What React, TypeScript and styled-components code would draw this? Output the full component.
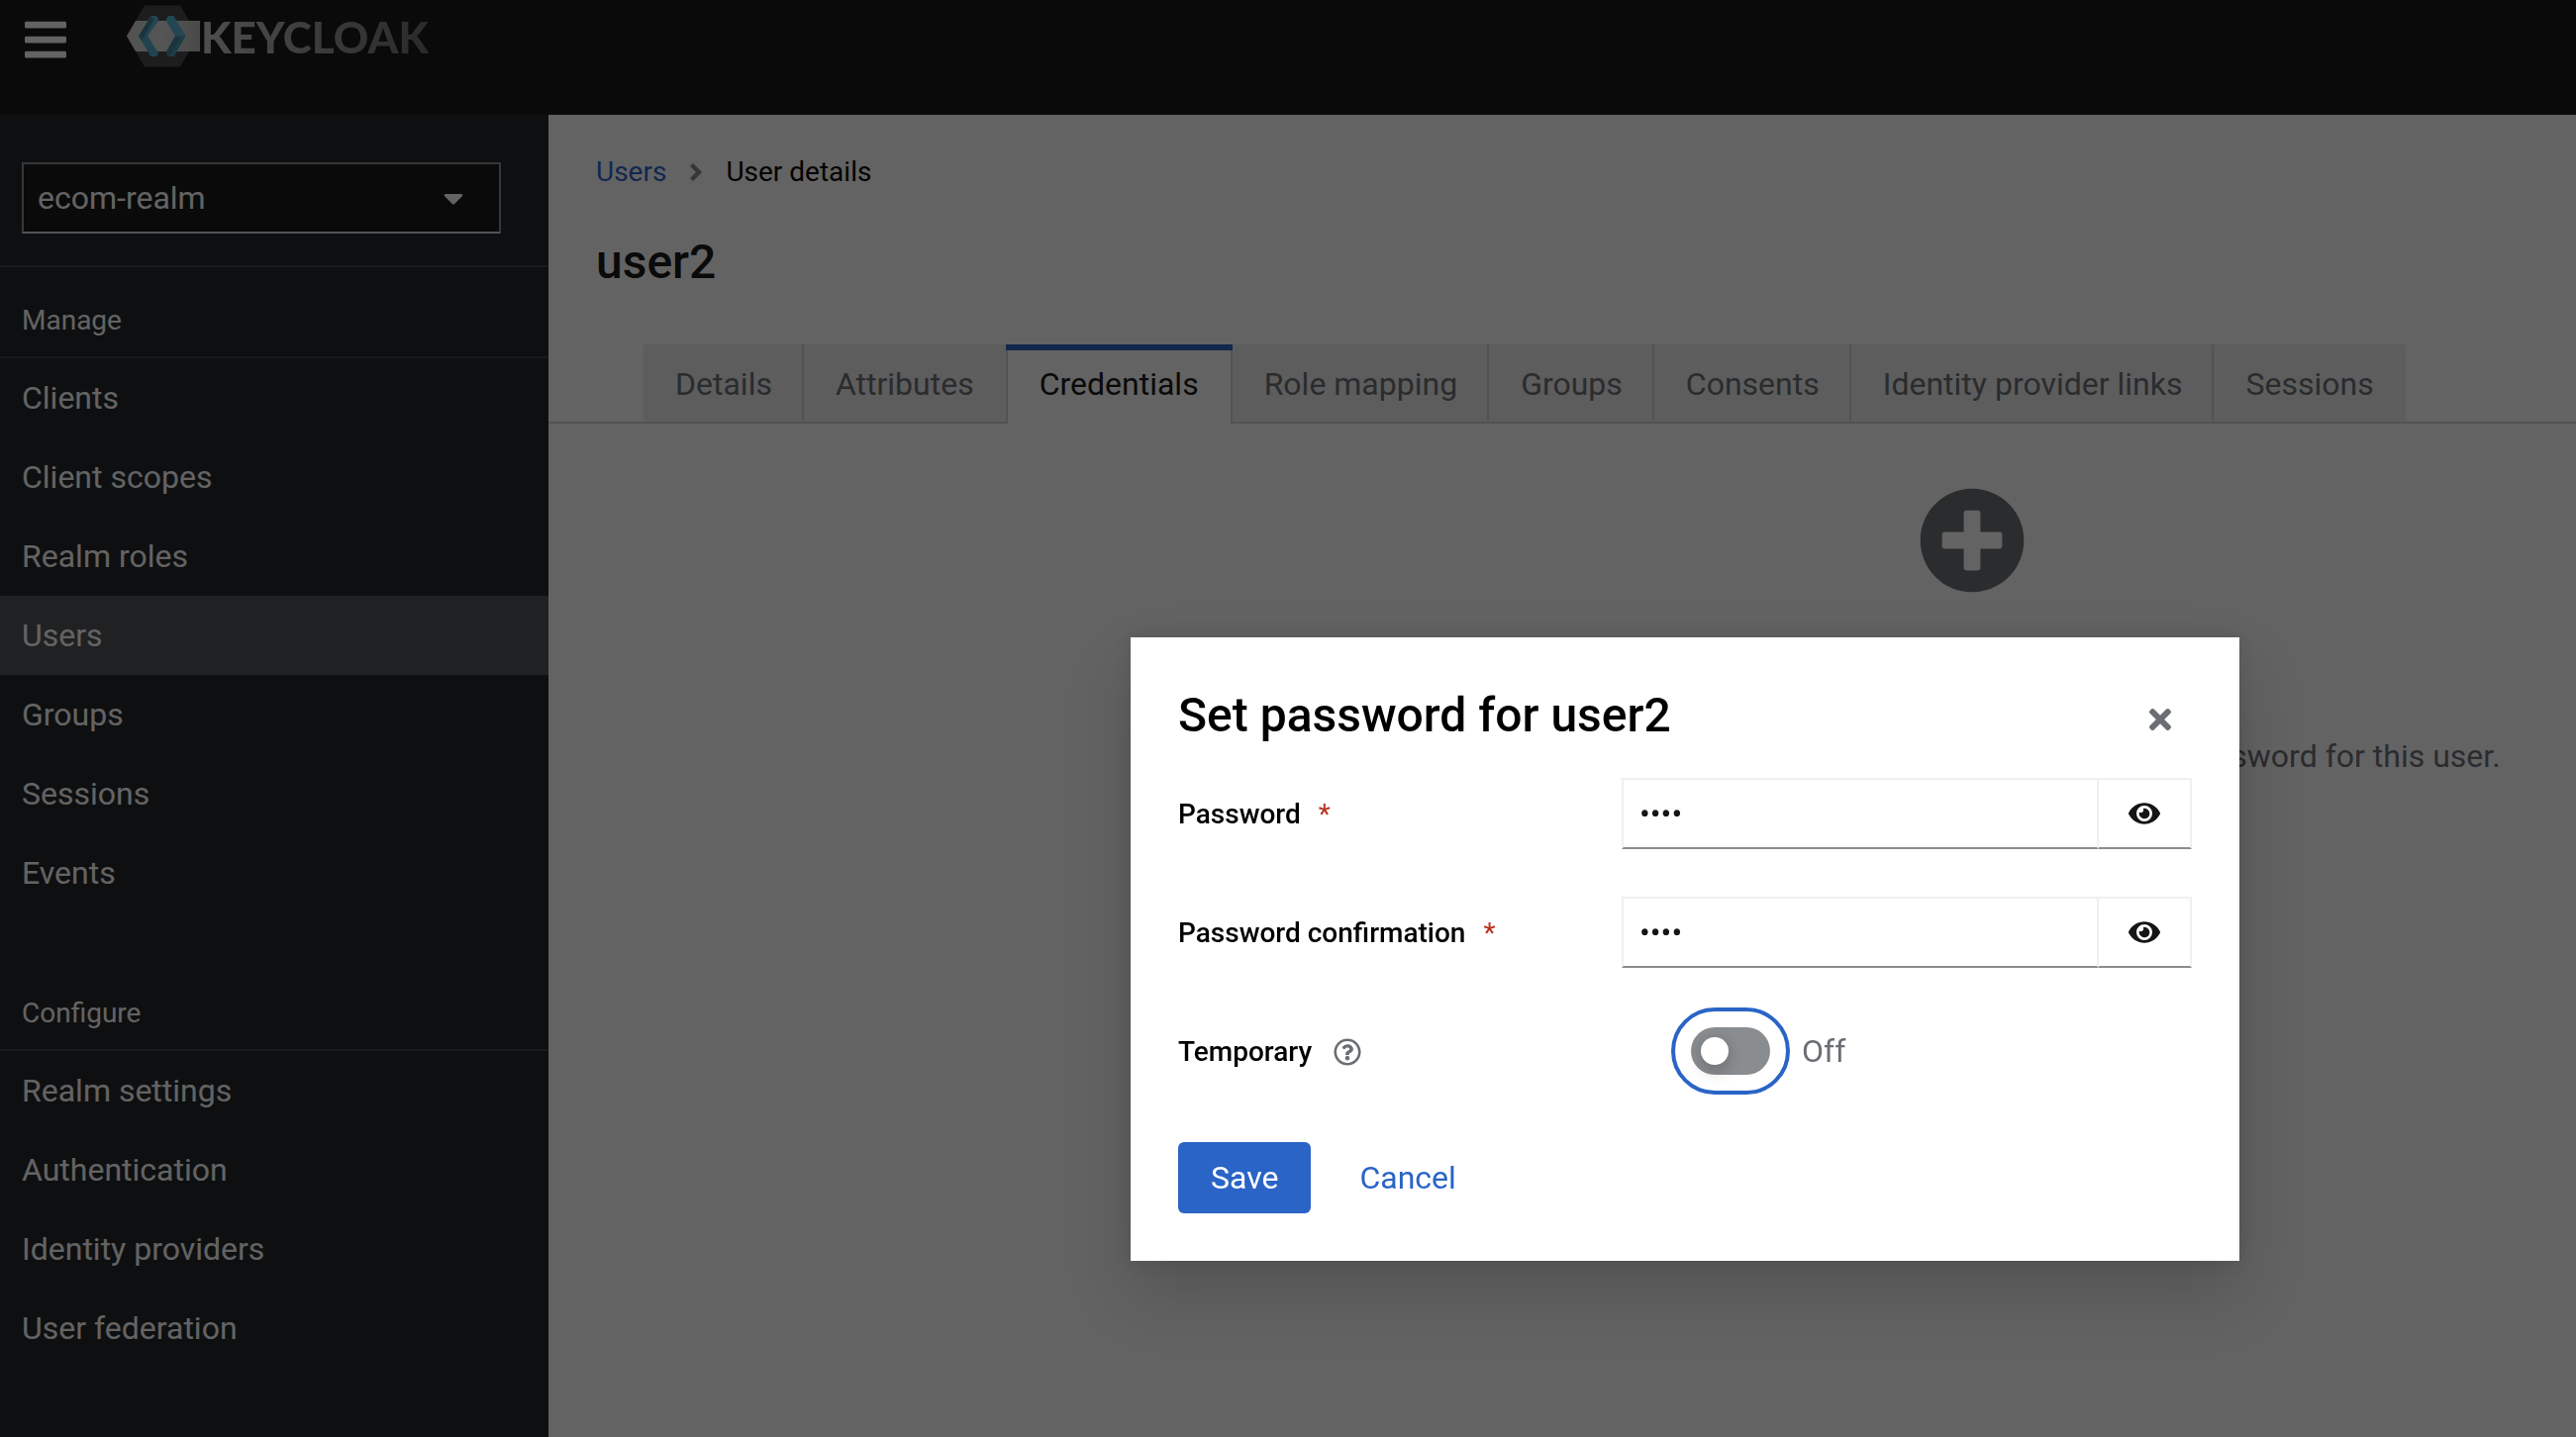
import React, { useState } from "react";
import styled, { createGlobalStyle, css } from "styled-components";
import {
  FaAngleRight,
  FaBars,
  FaCaretDown,
  FaEye,
  FaPlusCircle,
  FaRegQuestionCircle,
  FaTimes,
} from "react-icons/fa";

const c = {
  chrome: "#151515",
  sidebar: "#212427",
  sidebarActive: "#4f5255",
  sidebarLine: "#3c3f42",
  line: "#d2d2d2",
  lightLine: "#f0f0f0",
  muted: "#6a6e73",
  grey: "#8a8d90",
  link: "#2a64c6",
  danger: "#b9301c",
};

const GlobalStyle = createGlobalStyle`
  *, *::before, *::after { box-sizing: border-box; }
  html, body { margin: 0; }
  body {
    font-family: Roboto, "Liberation Sans", sans-serif;
    font-size: 32px;
    line-height: 48px;
    color: ${c.chrome};
    background: #fff;
    overflow: hidden;
  }
  button, input, select { font: inherit; color: inherit; }
  h1, h2, p, ul, ol { margin: 0; padding: 0; list-style: none; }
  svg { display: block; flex: none; }
`;

const Page = styled.div`
  display: grid;
  grid-template: auto 1fr / 554px minmax(0, 1fr);
  min-height: 100vh;
`;

const Masthead = styled.header`
  grid-column: 1 / -1;
  display: flex;
  align-items: flex-start;
  height: 116px;
  padding-left: 22px;
  background: ${c.chrome};
  color: #fff;
`;

const IconButton = styled.button`
  display: grid;
  place-items: center;
  padding: 0;
  border: 0;
  background: none;
  cursor: pointer;
`;

const MenuButton = styled(IconButton)`
  margin-top: 16px;
  font-size: 48px;
`;

const Brand = styled.a`
  display: flex;
  align-items: center;
  margin: 5px 0 0 57px;
  text-decoration: none;
`;

const Wordmark = styled.span`
  font: 900 44px/60px Lato, "Open Sans", sans-serif;
  color: transparent;
  background: linear-gradient(90deg, #c8c8c8, #6a6a6a);
  background-clip: text;
  -webkit-background-clip: text;
`;

const Sidebar = styled.nav`
  background: ${c.sidebar};
  color: #fff;
`;

const RealmPicker = styled.div`
  padding: 48px 48px 32px 22px;
  border-bottom: 2px solid ${c.sidebarLine};
`;

const SelectBox = styled.div`
  position: relative;
  display: flex;
  align-items: center;

  svg {
    position: absolute;
    right: 32px;
    pointer-events: none;
  }
`;

const Select = styled.select`
  appearance: none;
  width: 100%;
  height: 72px;
  padding: 0 64px 0 14px;
  border: 2px solid ${c.grey};
  border-bottom-color: ${c.line};
  border-radius: 0;
  background: ${c.chrome};
`;

const NavSection = styled.section`
  padding-top: 32px;

  & + & { padding-top: 80px; }
`;

const NavTitle = styled.h2`
  padding: 1px 22px 15px;
  border-bottom: 2px solid ${c.sidebarLine};
  font-size: 28px;
  line-height: 42px;
  font-weight: 400;
`;

const NavLink = styled.a<{ $current: boolean }>`
  display: block;
  padding: 16px 22px;
  color: #fff;
  text-decoration: none;
  background: ${(p) => (p.$current ? c.sidebarActive : "transparent")};
`;

const Main = styled.main`
  padding-top: 37px;
  background: #fff;
`;

const Breadcrumb = styled.ol`
  display: flex;
  align-items: center;
  gap: 16px;
  padding-left: 48px;
  font-size: 28px;
  line-height: 42px;
  color: #000;

  a { color: ${c.link}; text-decoration: none; }
  svg { color: ${c.grey}; }
  li { display: flex; align-items: center; gap: 16px; }
`;

const PageTitle = styled.h1`
  padding: 39px 48px 52px;
  font-size: 48px;
  line-height: 62px;
  font-weight: 500;
`;

const TabList = styled.div`
  display: flex;
  padding-left: 96px;
  box-shadow: inset 0 -2px 0 ${c.line};
`;

const Tab = styled.button<{ $active: boolean; $divider: boolean }>`
  border: 0;
  cursor: pointer;
  white-space: nowrap;
  ${(p) =>
    p.$active
      ? css`
          padding: 16px 34px;
          color: ${c.chrome};
          background: #fff;
          box-shadow: inset 0 6px 0 ${c.link}, inset 2px 0 0 ${c.line}, inset -2px 0 0 ${c.line};
        `
      : css`
          padding: 16px 32px;
          color: ${c.muted};
          background: ${c.lightLine};
          box-shadow: inset 0 -2px 0 ${c.line}${p.$divider ? `, inset -2px 0 0 ${c.line}` : ""};
        `}
`;

const EmptyState = styled.section`
  display: flex;
  flex-direction: column;
  align-items: center;
  gap: 140px;
  padding: 64px 0 0 828px;
  color: ${c.muted};
  white-space: nowrap;
`;

const EmptyStateText = styled.p`
  padding-right: 8px;
`;

const Backdrop = styled.div`
  position: fixed;
  inset: 0;
  display: flex;
  align-items: flex-start;
  justify-content: flex-end;
  padding: 644px 340px 0 0;
  background: rgba(3, 3, 3, 0.62);
`;

const Dialog = styled.section`
  width: 1120px;
  padding: 48px;
  background: #fff;
  box-shadow: 0 32px 64px rgba(3, 3, 3, 0.16), 0 0 16px rgba(3, 3, 3, 0.1);
`;

const DialogHeader = styled.header`
  display: flex;
  align-items: flex-end;
  justify-content: space-between;
  padding: 0 16px 32px 0;

  ${IconButton} {
    height: 54px;
    color: ${c.muted};
  }
`;

const DialogTitle = styled.h2`
  font-size: 48px;
  line-height: 62px;
  font-weight: 500;
  color: #000;
`;

const Form = styled.form`
  display: grid;
  gap: 48px;
`;

const FormRow = styled.div`
  display: grid;
  grid-template-columns: 448px minmax(0, 1fr);
  align-items: center;
  min-height: 72px;
`;

const LabelCell = styled.div`
  display: flex;
  align-items: center;
  gap: 22px;
  padding-top: 2px;
  color: ${c.muted};
`;

const Label = styled.label`
  font-size: 28px;
  line-height: 42px;
  font-weight: 500;
  color: #000;
`;

const Required = styled.span`
  margin-left: 18px;
  font-weight: 400;
  color: ${c.danger};
`;

const InputGroup = styled.div`
  display: flex;

  ${IconButton} {
    width: 94px;
    border: 2px solid ${c.lightLine};
    border-left: 0;
    border-bottom-color: ${c.grey};
    font-size: 32px;
  }
`;

const PasswordInput = styled.input`
  flex: 1;
  min-width: 0;
  height: 72px;
  padding: 0 16px;
  border: 2px solid ${c.lightLine};
  border-bottom-color: ${c.grey};
  border-radius: 0;
  background: #fff;
  outline: 0;
`;

const SwitchCell = styled.label`
  display: flex;
  align-items: center;
  gap: 32px;
  padding-left: 70px;
  color: ${c.muted};
`;

const Switch = styled.input`
  appearance: none;
  display: flex;
  align-items: center;
  width: 80px;
  height: 48px;
  margin: 0;
  padding: 0 10px;
  border-radius: 24px;
  background: ${c.grey};
  outline: 4px solid ${c.link};
  outline-offset: 16px;

  &::before {
    content: "";
    width: 28px;
    height: 28px;
    border-radius: 50%;
    background: #fff;
    box-shadow: 0 8px 16px rgba(3, 3, 3, 0.16), 0 0 12px rgba(3, 3, 3, 0.1);
  }

  &:checked { justify-content: flex-end; background: ${c.link}; }
`;

const Actions = styled.footer`
  display: flex;
  gap: 16px;
  padding-top: 8px;
`;

const ActionButton = styled.button<{ $primary?: boolean }>`
  padding: 12px 33px;
  border: 0;
  border-radius: 6px;
  cursor: pointer;
  color: ${(p) => (p.$primary ? "#fff" : c.link)};
  background: ${(p) => (p.$primary ? c.link : "transparent")};
`;

const navSections = [
  {
    title: "Manage",
    items: ["Clients", "Client scopes", "Realm roles", "Users", "Groups", "Sessions", "Events"],
  },
  {
    title: "Configure",
    items: ["Realm settings", "Authentication", "Identity providers", "User federation"],
  },
];

const tabs = [
  "Details",
  "Attributes",
  "Credentials",
  "Role mapping",
  "Groups",
  "Consents",
  "Identity provider links",
  "Sessions",
];
const activeTab = tabs.indexOf("Credentials");

function LogoMark() {
  return (
    <svg width="76" height="63" viewBox="0 0 76 63" aria-hidden="true">
      <defs>
        <linearGradient id="band" x1="0" x2="1" y1="0" y2="0">
          <stop offset="0" stopColor="#d0d0d0" />
          <stop offset="0.5" stopColor="#dadada" />
          <stop offset="1" stopColor="#bcbcbc" />
        </linearGradient>
      </defs>
      {/* hexagon and band */}
      <path d="M19 0.5H55L73 31.5L55 62.5H19L1 31.5Z" fill="#484848" />
      <path d="M10 16H75V47H10L1 31.5Z" fill="url(#band)" />
      {/* left bracket */}
      <path d="M25.500 11H31L33.500 15.500L22 31.500L33 49L31 52H25.500L13 31.500Z" fill="#58b4d4" />
      <path d="M13 31.500L22 31.500L33 49L31 52H25.500Z" fill="#53aaca" />
      <path d="M25.500 11L28.500 15L16.500 36L13 31.500Z" fill="#41859a" />
      {/* right bracket */}
      <path d="M43 11H48.500L60.500 31.500L48.500 52H43L40.500 48L50 31.500L40.500 15.500Z" fill="#58b4d4" />
      <path d="M50 31.500L60.500 31.500L48.500 52H43Z" fill="#4b9ab6" />
      <path d="M50 31.500L55 32.500L44.500 51.500L43 52L40.500 48Z" fill="#41859a" />
    </svg>
  );
}

function PasswordRow({ id, label }: { id: string; label: string }) {
  const [value, setValue] = useState("pass");
  const [visible, setVisible] = useState(false);
  return (
    <FormRow>
      <LabelCell>
        <Label htmlFor={id}>
          {label}
          <Required aria-hidden="true">*</Required>
        </Label>
      </LabelCell>
      <InputGroup>
        <PasswordInput
          id={id}
          type={visible ? "text" : "password"}
          value={value}
          onChange={(e) => setValue(e.target.value)}
          required
        />
        <IconButton type="button" aria-label="Show password" onClick={() => setVisible(!visible)}>
          <FaEye />
        </IconButton>
      </InputGroup>
    </FormRow>
  );
}

export default function App() {
  const [temporary, setTemporary] = useState(false);
  return (
    <>
      <GlobalStyle />
      <Page>
        <Masthead>
          <MenuButton type="button" aria-label="Global navigation">
            <FaBars />
          </MenuButton>
          <Brand href="#">
            <LogoMark />
            <Wordmark>KEYCLOAK</Wordmark>
          </Brand>
        </Masthead>

        <Sidebar aria-label="Global">
          <RealmPicker>
            <SelectBox>
              <Select aria-label="Realm" defaultValue="ecom-realm">
                <option>ecom-realm</option>
              </Select>
              <FaCaretDown />
            </SelectBox>
          </RealmPicker>
          {navSections.map((section) => (
            <NavSection key={section.title}>
              <NavTitle>{section.title}</NavTitle>
              <ul>
                {section.items.map((item) => (
                  <li key={item}>
                    <NavLink href="#" $current={item === "Users"}>
                      {item}
                    </NavLink>
                  </li>
                ))}
              </ul>
            </NavSection>
          ))}
        </Sidebar>

        <Main>
          <Breadcrumb>
            <li>
              <a href="#">Users</a>
            </li>
            <li>
              <FaAngleRight />
              User details
            </li>
          </Breadcrumb>
          <PageTitle>user2</PageTitle>
          <TabList role="tablist">
            {tabs.map((tab, i) => (
              <Tab
                key={tab}
                type="button"
                role="tab"
                aria-selected={i === activeTab}
                $active={i === activeTab}
                $divider={i !== activeTab - 1 && i !== tabs.length - 1}
              >
                {tab}
              </Tab>
            ))}
          </TabList>
          <EmptyState>
            <FaPlusCircle size={108} />
            <EmptyStateText>
              This user does not have any credentials. You can set password for this user.
            </EmptyStateText>
          </EmptyState>
        </Main>
      </Page>

      <Backdrop>
        <Dialog role="dialog" aria-modal="true" aria-labelledby="dialog-title">
          <DialogHeader>
            <DialogTitle id="dialog-title">Set password for user2</DialogTitle>
            <IconButton type="button" aria-label="Close">
              <FaTimes size={32} />
            </IconButton>
          </DialogHeader>
          <Form>
            <PasswordRow id="password" label="Password" />
            <PasswordRow id="password-confirmation" label="Password confirmation" />
            <FormRow>
              <LabelCell>
                <Label htmlFor="temporary">Temporary</Label>
                <IconButton type="button" aria-label="Help for Temporary">
                  <FaRegQuestionCircle size={28} />
                </IconButton>
              </LabelCell>
              <SwitchCell>
                <Switch
                  id="temporary"
                  type="checkbox"
                  role="switch"
                  checked={temporary}
                  onChange={(e) => setTemporary(e.target.checked)}
                />
                {temporary ? "On" : "Off"}
              </SwitchCell>
            </FormRow>
            <Actions>
              <ActionButton type="button" $primary>
                Save
              </ActionButton>
              <ActionButton type="button">Cancel</ActionButton>
            </Actions>
          </Form>
        </Dialog>
      </Backdrop>
    </>
  );
}
